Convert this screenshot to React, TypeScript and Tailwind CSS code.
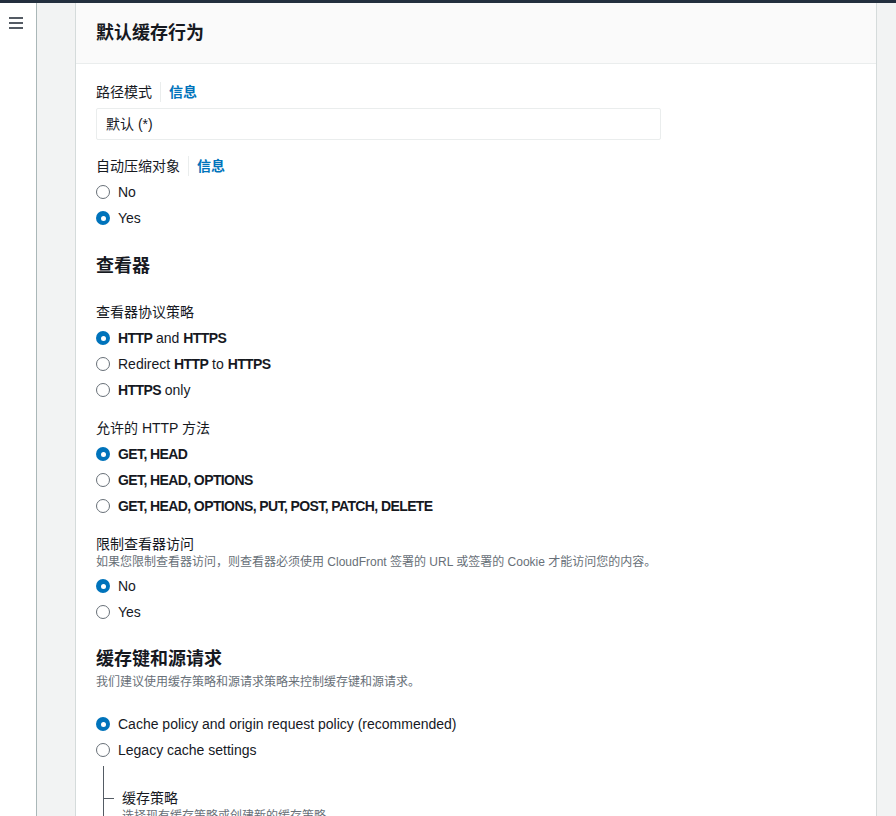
import React from "react";

const font = { fontFamily: '"Liberation Sans", "Noto Sans CJK SC", Arial, sans-serif' };

function Radio({ checked, children }: { checked?: boolean; children: React.ReactNode }) {
  return (
    <div className="flex h-[26px] items-center">
      {checked ? (
        <span className="flex h-[14px] w-[14px] items-center justify-center rounded-full bg-[#0073bb]">
          <span className="h-[5px] w-[5px] rounded-full bg-white" />
        </span>
      ) : (
        <span className="h-[14px] w-[14px] rounded-full border-[1.5px] border-[#687078] bg-white" />
      )}
      <span className="ml-[8px] text-[14px] leading-[20px] text-[#16191f]">{children}</span>
    </div>
  );
}

function B({ children }: { children: React.ReactNode }) {
  return <b className="font-bold tracking-[-0.6px]">{children}</b>;
}

function Label({ text, info }: { text: string; info?: boolean }) {
  return (
    <div className="flex h-[20px] items-center text-[14px] leading-[20px] text-[#16191f]">
      <span>{text}</span>
      {info && (
        <>
          <span className="ml-[8px] h-[20px] border-l border-[#eaeded]" />
          <span className="pl-[8px] font-bold text-[#0073bb]">信息</span>
        </>
      )}
    </div>
  );
}

export default function App() {
  return (
    <div className="flex h-[816px] w-[896px] flex-col overflow-hidden bg-[#f2f3f3]" style={font}>
      <div className="h-[3px] w-full shrink-0 bg-[#232f3e]" />
      <div className="flex min-h-0 flex-1">
        <div className="w-[37px] shrink-0 border-r border-[#aab7b8] bg-white pt-[13px] pl-[9px]">
          <svg width="14" height="14" viewBox="0 0 14 14">
            <rect x="0" y="1" width="14" height="2" fill="#545b64" />
            <rect x="0" y="6" width="14" height="2" fill="#545b64" />
            <rect x="0" y="11" width="14" height="2" fill="#545b64" />
          </svg>
        </div>
        <div className="w-[38px] shrink-0" />
        <div className="w-[802px] shrink-0 overflow-hidden border-x border-[#d5dbdb] bg-white">
          <div className="flex h-[61px] items-center border-b border-[#eaeded] bg-[#fafafa] px-[20px]">
            <h2 className="text-[18px] font-bold leading-[24px] text-[#16191f]">默认缓存行为</h2>
          </div>
          <div className="px-[20px] pt-[18px]">
            <Label text="路径模式" info />
            <div className="mt-[6px] flex h-[32px] w-[565px] items-center rounded-[2px] border border-[#eaeded] px-[9px] text-[14px] text-[#16191f]">
              默认 (*)
            </div>

            <div className="mt-[16px]">
              <Label text="自动压缩对象" info />
            </div>
            <div className="mt-[3px]">
              <Radio>No</Radio>
              <Radio checked>Yes</Radio>
            </div>

            <h2 className="mt-[23px] text-[18px] font-bold leading-[24px] text-[#16191f]">查看器</h2>

            <div className="mt-[24px]">
              <Label text="查看器协议策略" />
            </div>
            <div className="mt-[3px]">
              <Radio checked>
                <B>HTTP</B> and <B>HTTPS</B>
              </Radio>
              <Radio>
                Redirect <B>HTTP</B> to <B>HTTPS</B>
              </Radio>
              <Radio>
                <B>HTTPS</B> only
              </Radio>
            </div>

            <div className="mt-[15px]">
              <Label text="允许的 HTTP 方法" />
            </div>
            <div className="mt-[3px]">
              <Radio checked>
                <B>GET, HEAD</B>
              </Radio>
              <Radio>
                <B>GET, HEAD, OPTIONS</B>
              </Radio>
              <Radio>
                <B>GET, HEAD, OPTIONS, PUT, POST, PATCH, DELETE</B>
              </Radio>
            </div>

            <div className="mt-[15px]">
              <Label text="限制查看器访问" />
            </div>
            <p className="text-[12px] leading-[16px] text-[#687078]">
              如果您限制查看器访问，则查看器必须使用 CloudFront 签署的 URL 或签署的 Cookie 才能访问您的内容。
            </p>
            <div className="mt-[3px]">
              <Radio checked>No</Radio>
              <Radio>Yes</Radio>
            </div>

            <h2 className="mt-[22px] text-[18px] font-bold leading-[24px] text-[#16191f]">缓存键和源请求</h2>
            <p className="mt-[3px] text-[12px] leading-[16px] text-[#687078]">
              我们建议使用缓存策略和源请求策略来控制缓存键和源请求。
            </p>
            <div className="mt-[21px]">
              <Radio checked>Cache policy and origin request policy (recommended)</Radio>
              <Radio>Legacy cache settings</Radio>
            </div>

            <div className="ml-[7px] mt-[3px] border-l border-[#545b64] pt-[22px]">
              <div className="flex items-start">
                <span className="mt-[10px] w-[10px] border-t border-[#545b64]" />
                <div className="ml-[8px]">
                  <div className="text-[14px] leading-[20px] text-[#16191f]">缓存策略</div>
                  <div className="text-[12px] leading-[16px] text-[#687078]">选择现有缓存策略或创建新的缓存策略。</div>
                </div>
              </div>
            </div>
          </div>
        </div>
        <div className="flex-1" />
      </div>
    </div>
  );
}
